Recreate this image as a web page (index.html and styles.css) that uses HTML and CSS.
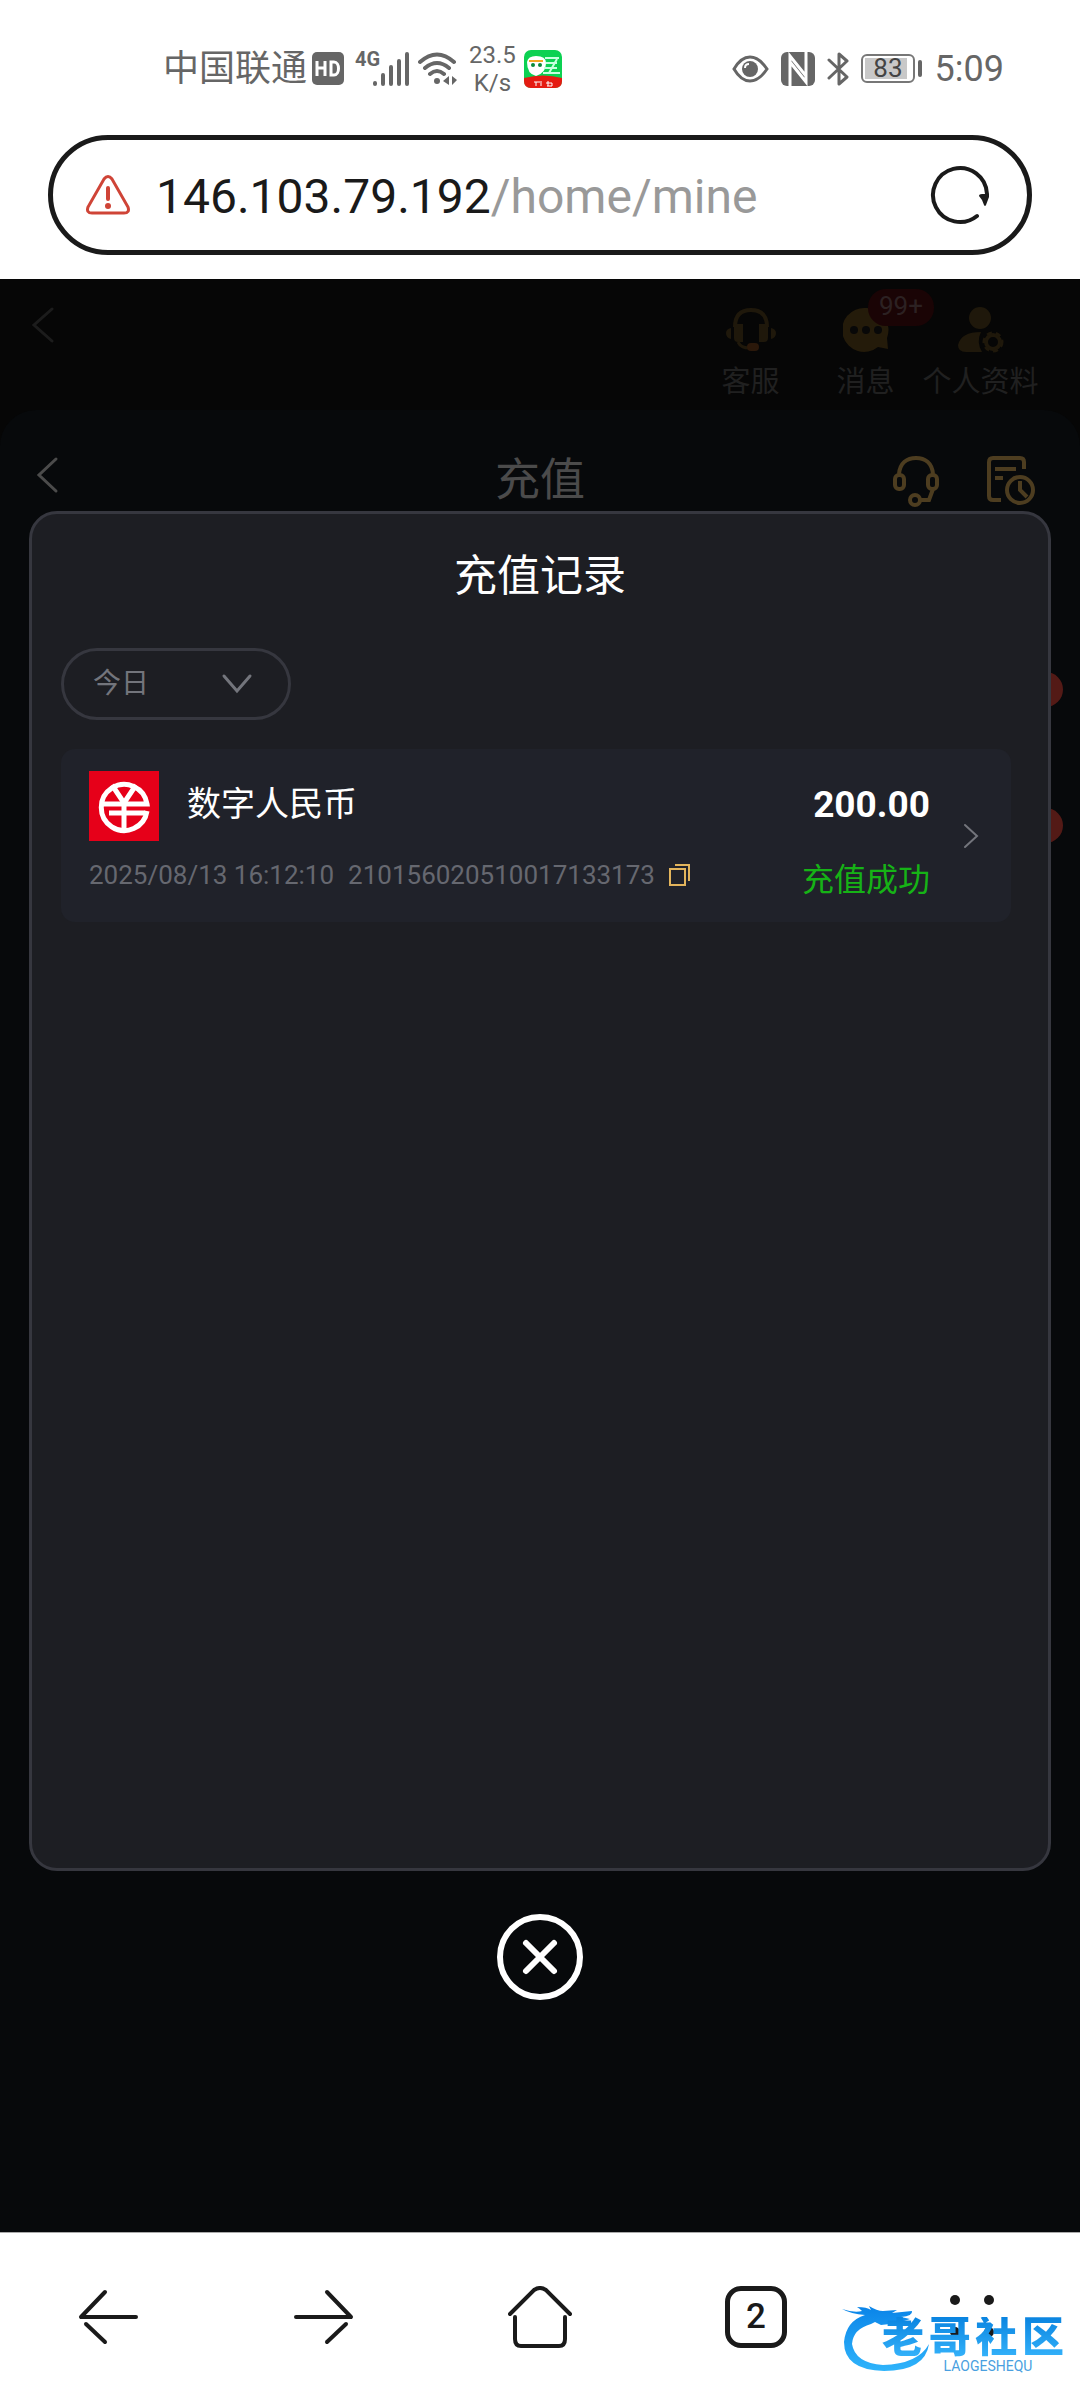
FILE: index.html
```
<!DOCTYPE html>
<html lang="zh-CN">

<head>
    <meta charset="UTF-8">
    <meta name="viewport" content="width=device-width, initial-scale=1.0">
    <title>充值记录</title>
    <link rel="stylesheet" href="styles.css">
</head>

<body>

    <header class="browser_top">
        <div class="status">
            <span class="carrier">中国联通</span>
            <svg class="hd" width="32" height="33" viewBox="0 0 32 33">
                <rect width="32" height="33" rx="5" fill="#666" />
                <path d="M5 9v15M13 9v15M5 16h8M19 10v13h3c6 0 6-13 0-13z" fill="none" stroke="#fff" stroke-width="3" />
            </svg>
            <span class="net">4G</span>
            <svg class="signal" width="36" height="34" viewBox="0 0 36 34" stroke="#666" stroke-width="4" stroke-linecap="round">
                <path d="M2 31v1M10 23v9M18 15v17M26 9v23M34 2v30" />
            </svg>
            <svg class="wifi" width="40" height="34" viewBox="0 0 40 34" fill="none" stroke="#666" stroke-width="4" stroke-linecap="round">
                <path d="M2 10Q19-5 36 10M7 16q12-10 24 0M12 22q7-6 14 0" />
                <circle cx="19" cy="29" r="3" fill="#666" stroke="none" />
                <path d="M31 24v9l-6-4zM34 24v9l5-5z" fill="#666" stroke="none" />
            </svg>
            <span class="speed">23.5<br>K/s</span>
            <svg class="app" width="38" height="38" viewBox="0 0 38 38">
                <rect width="38" height="38" rx="7" fill="#0cd152" />
                <path d="M0 28q19-5 38 0v3q0 7-7 7H7q-7 0-7-7z" fill="#e51b12" />
                <path d="M3 12Q4 6 12 6q10 0 10 7 0 10-10 13Q3 24 3 12z" fill="#fff" />
                <path d="M21 8h14M22 13h11M20 18h13M19 23h17M25 23l8-14" stroke="#c8ffe0" stroke-width="2" />
                <path d="M5 11h14" stroke="#f5a623" stroke-width="2" />
                <circle cx="9" cy="15" r="2" fill="#0a8a3a" />
                <circle cx="16" cy="15" r="2" fill="#0a8a3a" />
                <path d="M10 32h6M12 32v4M17 31v5M24 31v5M22 33h6v3h-5" fill="none" stroke="#fff" />
            </svg>

            <div class="status_right">
                <svg width="37" height="28" viewBox="0 0 37 28">
                    <path d="M2 14Q9 2 18 2t17 12Q27 26 18 26T2 14z" fill="none" stroke="#666" stroke-width="3" />
                    <circle cx="18" cy="14" r="8" fill="#666" />
                    <path d="M13 13q0-4 4-4" fill="none" stroke="#fff" stroke-width="2" />
                </svg>
                <svg width="34" height="34" viewBox="0 0 34 34">
                    <rect width="34" height="34" rx="6" fill="#666" />
                    <path d="M9 34V4l16 20M25 0v30L9 10" fill="none" stroke="#fff" stroke-width="3" />
                </svg>
                <svg width="22" height="36" viewBox="0 0 22 36" fill="none" stroke="#666" stroke-width="3" stroke-linecap="round" stroke-linejoin="round">
                    <path d="M2 9l18 17-8 7V3l8 7L2 27" />
                </svg>
                <span class="battery"><span class="level">83</span></span>
                <span class="clock">5:09</span>
            </div>
        </div>

        <div class="address">
            <svg width="44" height="40" viewBox="0 0 44 40">
                <path d="M18 4q4-5 8 0l16 28q2 6-4 6H6q-6 0-4-6z" fill="none" stroke="#cf4437" stroke-width="3" />
                <path d="M22 13v11" stroke="#cf4437" stroke-width="4" stroke-linecap="round" />
                <circle cx="22" cy="31" r="3" fill="#cf4437" />
            </svg>
            <button class="url">146.103.79.192<span>/home/mine</span></button>
            <button class="reload" aria-label="刷新">
                <svg width="60" height="60" viewBox="0 0 60 60">
                    <path d="M47 51A27 27 0 1 1 57 29" fill="none" stroke="#1a1a1a" stroke-width="4" stroke-linecap="round" />
                    <path d="M49 31q0-2 3-2h7v3l-3 8q-1 2-2 0l-2-5z" fill="#1a1a1a" />
                </svg>
            </button>
        </div>
    </header>

    <main class="stage">

        <!-- siden bagved, dimmed -->
        <div class="mine">
            <button class="back" aria-label="返回">
                <svg width="24" height="36" viewBox="0 0 24 36"><path d="M21 2L3 18l18 16" fill="none" stroke="currentColor" stroke-width="3" stroke-linecap="round" /></svg>
            </button>
            <nav class="links">
                <a href="#service">
                    <svg width="50" height="46" viewBox="0 0 50 46">
                        <path d="M9 20Q9 3 25 3t16 17" fill="none" stroke="#1f180b" stroke-width="4" />
                        <path d="M8 17h9v18h-5q-4 0-4-4zM33 17h9v14q0 4-4 4h-5zM0 26q0-4 5-5v11q-5-1-5-6zM50 26q0-4-5-5v11q5-1 5-6z" fill="#1f180b" />
                        <path d="M12 35q3 6 11 6" fill="none" stroke="#1f180b" stroke-width="3" />
                        <rect x="21" y="36" width="12" height="8" rx="4" fill="#2b180a" />
                    </svg>
                    客服
                </a>
                <a href="#news">
                    <svg width="46" height="46" viewBox="0 0 46 46">
                        <path d="M23 1a22 22 0 0 1 21 30l1 11-10-2A22 22 0 1 1 23 1z" fill="#241b0a" />
                        <circle cx="11" cy="23" r="4" fill="#080808" />
                        <circle cx="23" cy="23" r="4" fill="#080808" />
                        <circle cx="35" cy="23" r="4" fill="#080808" />
                    </svg>
                    消息
                    <span class="count">99+</span>
                </a>
                <a href="#profile">
                    <svg width="46" height="46" viewBox="0 0 46 46">
                        <circle cx="22" cy="11" r="11" fill="#1f180b" />
                        <path d="M23 25q-5 10 1 20H8q-8 0-8-7 3-13 23-13z" fill="#1f180b" />
                        <circle cx="35" cy="35" r="7" fill="none" stroke="#1f180b" stroke-width="4" />
                        <circle cx="35" cy="35" r="9" fill="none" stroke="#1f180b" stroke-width="3" stroke-dasharray="5 4" />
                    </svg>
                    个人资料
                </a>
            </nav>
        </div>

        <section class="recharge">
            <div class="recharge_head">
                <button class="back" aria-label="返回">
                    <svg width="24" height="38" viewBox="0 0 24 38"><path d="M21 3L4 19l17 16" fill="none" stroke="currentColor" stroke-width="3" stroke-linecap="round" /></svg>
                </button>
                <h2>充值</h2>
                <div class="tools">
                    <button aria-label="客服">
                        <svg width="46" height="52" viewBox="0 0 46 52" fill="none" stroke="#4d3d20" stroke-width="4">
                            <path d="M6 19C7 8 14 3 23 3s16 5 17 16" />
                            <rect x="2" y="20" width="9" height="14" rx="4" />
                            <rect x="35" y="20" width="9" height="14" rx="4" />
                            <path d="M40 34l-4 11h-9" />
                            <circle cx="22" cy="45" r="5" />
                        </svg>
                    </button>
                    <button aria-label="记录">
                        <svg width="48" height="50" viewBox="0 0 48 50" fill="none" stroke="#4d3d20" stroke-width="4">
                            <path d="M14 44H6q-4 0-4-4V6q0-4 4-4h27q4 0 4 4v7M8 13h21M8 22h8" />
                            <circle cx="33" cy="34" r="13" />
                            <path d="M33 25v9l7 7" />
                        </svg>
                    </button>
                </div>
            </div>
            <div class="channels">
                <span class="dot"></span>
                <span class="dot"></span>
            </div>
        </section>

        <div class="overlay">
            <section class="modal" role="dialog" aria-labelledby="modal_title">
                <h1 id="modal_title">充值记录</h1>

                <div class="filter">
                    <select aria-label="日期">
                        <option>今日</option>
                        <option>昨日</option>
                        <option>近七日</option>
                    </select>
                    <svg width="32" height="22" viewBox="0 0 32 22"><path d="M3 3l13 15L29 3" fill="none" stroke="#73757c" stroke-width="3" stroke-linecap="round" /></svg>
                </div>

                <article class="record">
                    <div class="info">
                        <div class="channel">
                            <svg width="70" height="70" viewBox="0 0 70 70">
                                <rect width="70" height="70" fill="#e60019" />
                                <g fill="none" stroke="#fff" stroke-width="5">
                                    <path d="M58 40A23 23 0 1 1 58 33H13" />
                                    <path d="M20 42h36M23 14l12 18 12-18M35 30v28" />
                                </g>
                            </svg>
                            <h3>数字人民币</h3>
                        </div>
                        <div class="meta">
                            <span>2025/08/13 16:12:10</span>
                            <span>210156020510017133173</span>
                            <button aria-label="复制">
                                <svg width="22" height="22" viewBox="0 0 22 22" fill="none" stroke="#e2b45c" stroke-width="2"><path d="M1 5h15v16H1zM6 1h14v16" /></svg>
                            </button>
                        </div>
                    </div>
                    <div class="result">
                        <strong>200.00</strong>
                        <span>充值成功</span>
                    </div>
                    <button class="more" aria-label="详情">
                        <svg width="16" height="26" viewBox="0 0 16 26"><path d="M2 2l12 11L2 24" fill="none" stroke="#73757c" stroke-width="2" stroke-linecap="round" /></svg>
                    </button>
                </article>
            </section>

            <button class="close" aria-label="关闭">
                <svg width="86" height="86" viewBox="0 0 86 86" fill="none" stroke="#fff" stroke-width="6" stroke-linecap="round">
                    <circle cx="43" cy="43" r="40" />
                    <path d="M29 29l28 28M57 29L29 57" />
                </svg>
            </button>
        </div>
    </main>

    <footer class="browser_nav">
        <button aria-label="后退">
            <svg width="60" height="56" viewBox="0 0 60 56" fill="none" stroke="#1a1a1a" stroke-width="4" stroke-linecap="round">
                <path d="M27 3L3 28h55" stroke-linejoin="round" />
                <path d="M8 35l19 18" />
            </svg>
        </button>
        <button aria-label="前进">
            <svg width="60" height="56" viewBox="0 0 60 56" fill="none" stroke="#1a1a1a" stroke-width="4" stroke-linecap="round">
                <path d="M33 3l24 25H2" stroke-linejoin="round" />
                <path d="M52 35L33 53" />
            </svg>
        </button>
        <button aria-label="主页">
            <svg width="64" height="62" viewBox="0 0 64 62" fill="none" stroke="#1a1a1a" stroke-width="4" stroke-linecap="round">
                <path d="M2 28L26 4q6-4 12 0l24 24" />
                <path d="M7 31v22q0 7 6 7h38q6 0 6-7V31" />
            </svg>
        </button>
        <button class="tabs"><span>2</span></button>
        <button aria-label="菜单">
            <svg width="46" height="44" viewBox="0 0 46 44" fill="#1a1a1a">
                <circle cx="6" cy="5" r="5" />
                <circle cx="40" cy="5" r="5" />
                <circle cx="6" cy="37" r="5" />
                <circle cx="40" cy="37" r="5" />
            </svg>
        </button>

        <div class="watermark">
            <svg width="90" height="72" viewBox="0 0 90 72">
                <defs>
                    <linearGradient id="blue" x1="0" y1="0" x2="0" y2="1">
                        <stop offset="0" stop-color="#0a84e8" />
                        <stop offset="1" stop-color="#2fb4fb" />
                    </linearGradient>
                </defs>
                <path d="M1 5q12 4 20 2-3-3-5-4 10 0 14 3l-2-4q8 5 14 5l14-1-5 3 20-2q1 5-11 6l9 2-9 3 2 4-13-2-9 1-6-3-4 2q-18 5-19 20 3 19 31 21 35-1 46-21-4 27-45 27Q3 66 3 38 5 17 24 11 10 10 1 5z" fill="url(#blue)" />
            </svg>
            <div class="brand">
                <b><span>老</span><span>哥</span><span>社</span><span>区</span></b>
                <small>LAOGESHEQU</small>
            </div>
        </div>
    </footer>

</body>

</html>
```
FILE: styles.css
```
* {
    box-sizing: border-box;
}

body {
    margin: 0;
    min-height: 100vh;
    display: flex;
    flex-direction: column;
    background: #fff;
    font-family: Roboto, "Noto Sans CJK SC", sans-serif;
}

h1,
h2,
h3 {
    margin: 0;
    font-weight: 400;
}

button {
    padding: 0;
    border: 0;
    background: transparent;
    font-family: inherit;
    color: inherit;
}

svg {
    display: block;
    flex: none;
}

/* status bar */
.status {
    display: flex;
    align-items: center;
    height: 135px;
    padding: 2px 76px 0 163px;
    color: #666;
}

.carrier {
    font-size: 36px;
    line-height: 40px;
}

.hd {
    margin-left: 5px;
}

.net {
    align-self: flex-start;
    margin: 47px 0 0 11px;
    width: 18px;
    font-size: 20px;
    line-height: 20px;
    font-weight: 700;
    white-space: nowrap;
}

.wifi {
    margin-left: 9px;
}

.speed {
    margin-left: 11px;
    font-size: 24px;
    line-height: 28px;
    text-align: center;
}

.app {
    margin-left: 8px;
}

.status_right {
    display: flex;
    align-items: center;
    gap: 12px;
    margin-left: auto;
}

.battery {
    position: relative;
    width: 54px;
    height: 29px;
    padding: 2px;
    margin-right: 8px;
    border: 2px solid #777;
    border-radius: 6px;
}

.battery::after {
    content: "";
    position: absolute;
    top: 4px;
    right: -9px;
    width: 4px;
    height: 17px;
    border-radius: 2px;
    background: #666;
}

.level {
    display: block;
    width: 42px;
    padding-right: 4px;
    background: #c8c8c8;
    color: #444;
    font-size: 26px;
    line-height: 21px;
    text-align: right;
}

.clock {
    font-size: 36px;
    line-height: 40px;
}

/* address bar */
.address {
    display: flex;
    align-items: center;
    height: 120px;
    margin: 0 48px 24px;
    padding: 0 37px 0 33px;
    border: 5px solid #1a1a1a;
    border-radius: 60px;
}

.url {
    flex: 1;
    margin-left: 26px;
    padding-top: 4px;
    color: #1a1a1a;
    font-size: 48px;
    line-height: 56px;
    text-align: left;
}

.url span {
    color: #999;
}

/* page behind the dialog */
.stage {
    position: relative;
    flex: 1;
    display: flex;
    flex-direction: column;
    background: #060606;
}

.mine {
    display: flex;
    justify-content: space-between;
    align-items: flex-start;
    height: 131px;
    padding: 28px 42px 0 31px;
    color: #1c1c1c;
}

.links {
    display: flex;
}

.links a {
    position: relative;
    display: flex;
    flex-direction: column;
    align-items: center;
    width: 115px;
    color: #202020;
    font-size: 29px;
    line-height: 58px;
    white-space: nowrap;
    text-decoration: none;
}

.count {
    position: absolute;
    top: -18px;
    left: 60px;
    width: 66px;
    height: 37px;
    border-radius: 18px;
    background: #1a0405;
    color: #2c2122;
    font-size: 26px;
    line-height: 34px;
    text-align: center;
}

.recharge {
    flex: 1;
    border-radius: 36px 36px 0 0;
    background: #07090b;
}

.recharge_head {
    display: grid;
    grid-template-columns: 1fr auto 1fr;
    align-items: center;
    height: 136px;
    padding: 6px 45px 0 35px;
    color: #4b4b4b;
}

.recharge_head .back {
    justify-self: start;
    padding-bottom: 12px;
}

.recharge_head h2 {
    font-size: 45px;
    line-height: 60px;
    padding-left: 10px;
}

.tools {
    display: flex;
    align-items: center;
    justify-content: flex-end;
    gap: 48px;
}

.channels {
    display: flex;
    flex-direction: column;
    align-items: flex-end;
    gap: 101px;
    padding: 126px 17px 0;
}

.dot {
    width: 35px;
    height: 35px;
    border-radius: 50%;
    background: #531a16;
}

/* dialog */
.overlay {
    position: absolute;
    inset: 0;
    display: flex;
    flex-direction: column;
    align-items: center;
    gap: 43px;
    padding: 232px 29px;
}

.modal {
    flex: 1;
    width: 100%;
    padding-top: 32px;
    border: 3px solid #36373f;
    border-radius: 28px;
    background: #1d1e23;
}

.modal h1 {
    color: #fff;
    font-size: 43px;
    line-height: 60px;
    text-align: center;
}

.filter {
    position: relative;
    width: 230px;
    margin: 42px 0 29px 29px;
}

.filter select {
    display: block;
    width: 100%;
    height: 72px;
    padding: 0 29px 2px;
    border: 3px solid #36373f;
    border-radius: 36px;
    appearance: none;
    background: transparent;
    color: #73757c;
    font-family: inherit;
    font-size: 28px;
}

.filter svg {
    position: absolute;
    top: 25px;
    right: 38px;
    pointer-events: none;
}

.record {
    display: flex;
    margin: 0 37px 0 29px;
    padding: 22px 32px 32px 28px;
    border-radius: 14px;
    background: #20222a;
}

.info {
    flex: 1;
}

.channel {
    display: flex;
    align-items: center;
    gap: 28px;
}

.channel h3 {
    color: #fff;
    font-size: 34px;
    line-height: 44px;
    padding-bottom: 4px;
}

.meta {
    display: flex;
    align-items: center;
    gap: 14px;
    margin-top: 19px;
    color: #666870;
    font-size: 26px;
    line-height: 30px;
}

.result {
    display: flex;
    flex-direction: column;
    align-items: flex-end;
    gap: 21px;
}

.result strong {
    color: #fff;
    font-size: 37px;
    line-height: 68px;
}

.result span {
    color: #16b316;
    font-size: 32px;
    line-height: 40px;
    margin-bottom: -10px;
}

.more {
    margin-left: 33px;
    padding-top: 10px;
}

/* bottom bar */
.browser_nav {
    position: relative;
    display: grid;
    grid-template-columns: repeat(5, 1fr);
    place-items: center;
    height: 168px;
    padding-top: 1px;
    border-top: 1px solid #aaa;
}

.tabs {
    width: 62px;
    height: 62px;
    border: 5px solid #1a1a1a;
    border-radius: 16px;
    color: #1a1a1a;
    font-size: 35px;
    line-height: 50px;
    font-weight: 500;
}

.watermark {
    position: absolute;
    right: 16px;
    bottom: 24px;
    display: flex;
    width: 223px;
}

.brand {
    display: flex;
    flex-direction: column;
    align-items: center;
    flex: 1;
    margin: 13px 0 0 -49px;
}

.brand b {
    display: flex;
    justify-content: space-between;
    width: 100%;
    background: linear-gradient(#0a84e0, #36b4fb);
    background-clip: text;
    color: transparent;
    font-size: 42px;
    line-height: 42px;
    font-weight: 900;
}

.brand small {
    color: #4a9fe0;
    font-size: 14px;
    line-height: 14px;
    padding-left: 30px;
}
```
